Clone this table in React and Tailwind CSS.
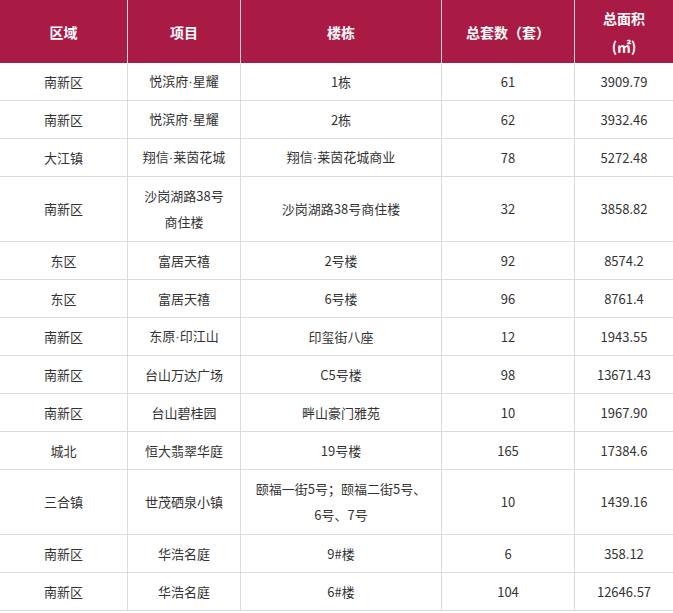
import React from "react";

const rows = [
  ["南新区", "悦滨府·星耀", "1栋", "61", "3909.79"],
  ["南新区", "悦滨府·星耀", "2栋", "62", "3932.46"],
  ["大江镇", "翔信·莱茵花城", "翔信·莱茵花城商业", "78", "5272.48"],
  ["南新区", ["沙岗湖路38号", "商住楼"], "沙岗湖路38号商住楼", "32", "3858.82"],
  ["东区", "富居天禧", "2号楼", "92", "8574.2"],
  ["东区", "富居天禧", "6号楼", "96", "8761.4"],
  ["南新区", "东原·印江山", "印玺街八座", "12", "1943.55"],
  ["南新区", "台山万达广场", "C5号楼", "98", "13671.43"],
  ["南新区", "台山碧桂园", "畔山豪门雅苑", "10", "1967.90"],
  ["城北", "恒大翡翠华庭", "19号楼", "165", "17384.6"],
  ["三合镇", "世茂硒泉小镇", ["颐福一街5号；颐福二街5号、", "6号、7号"], "10", "1439.16"],
  ["南新区", "华浩名庭", "9#楼", "6", "358.12"],
  ["南新区", "华浩名庭", "6#楼", "104", "12646.57"],
];

function Line({ s }) {
  const parts = s.split("·");
  return (
    <>
      {parts.map((p, i) => (
        <React.Fragment key={i}>
          {i > 0 && (
            <span style={{ fontFamily: '"Liberation Sans", sans-serif' }}>·</span>
          )}
          {p}
        </React.Fragment>
      ))}
    </>
  );
}

function Content({ v }) {
  if (Array.isArray(v)) {
    return (
      <span>
        {v.map((l, i) => (
          <span key={i} className="block whitespace-nowrap">
            <Line s={l} />
          </span>
        ))}
      </span>
    );
  }
  return (
    <span className="whitespace-nowrap">
      <Line s={v} />
    </span>
  );
}

export default function App() {
  const headers = [
    ["区域"],
    ["项目"],
    ["楼栋"],
    ["总套数（套）"],
    ["总面积", "(㎡)"],
  ];
  return (
    <div
      className="w-[673px] h-[613px] bg-white overflow-hidden"
      style={{ fontFamily: '"Noto Sans CJK SC", "Noto Sans", sans-serif' }}
    >
      <div className="grid grid-cols-[128px_113px_201px_133px_98px]">
        {headers.map((h, i) => (
          <div
            key={i}
            className={`h-[63px] bg-[#a91b44] text-white font-bold text-[14px] leading-[28px] flex items-center justify-center text-center ${
              i < 4 ? "border-r border-r-[#ead0d7]" : ""
            }`}
          >
            <div>
              {h.map((l, j) => (
                <div key={j}>{l}</div>
              ))}
            </div>
          </div>
        ))}
        {rows.map((r, ri) => {
          const multi = r.some((c) => Array.isArray(c));
          return r.map((c, ci) => (
            <div
              key={ri + "-" + ci}
              className={`${multi ? "h-[65px]" : "h-[38px]"} border-b border-b-[#dcdcdc] ${
                ci < 4 ? "border-r border-r-[#dcdcdc]" : ""
              } flex items-center justify-center text-center text-[13px] leading-[26px] text-[#333333]`}
            >
              <Content v={c} />
            </div>
          ));
        })}
      </div>
    </div>
  );
}
